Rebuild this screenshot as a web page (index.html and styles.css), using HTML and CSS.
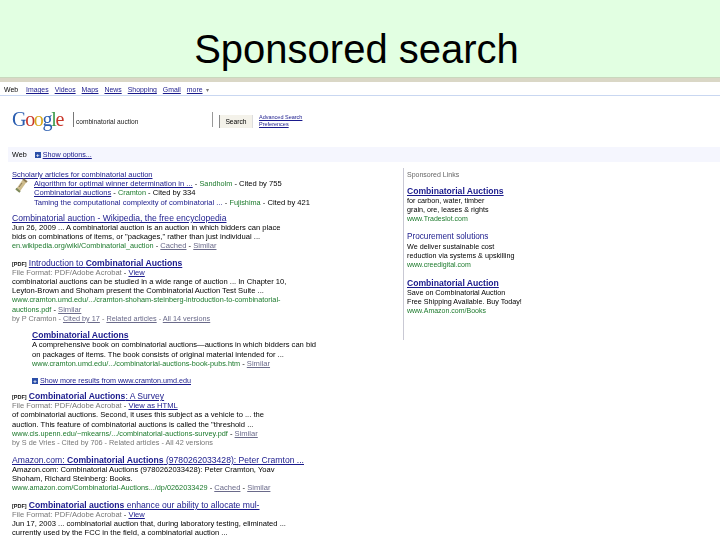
FILE: index.html
```html
<!DOCTYPE html>
<html lang="en">
<head>
<meta charset="utf-8">
<title>Sponsored search</title>
<link rel="stylesheet" href="styles.css">
</head>
<body>
<header class="slide-head"><h1>Sponsored search</h1></header>
<main class="shot">
  <nav class="topnav">
    <span class="cur">Web</span><a>Images</a><a>Videos</a><a>Maps</a><a>News</a><a>Shopping</a><a>Gmail</a><a>more</a><span class="arrow">▾</span>
  </nav>
  <div class="searchrow">
    <div class="logo"><span class="b">G</span><span class="r">o</span><span class="y">o</span><span class="b">g</span><span class="g">l</span><span class="r">e</span></div>
    <div class="query">combinatorial auction</div>
    <div class="btn">Search</div>
    <div class="adv"><a>Advanced Search</a><a>Preferences</a></div>
  </div>
  <div class="webbar"><span>Web</span><i class="plus">+</i><a>Show options...</a></div>
  <div class="cols">
    <div class="results">
      <div class="res first">
        <a class="plain">Scholarly articles for combinatorial auction</a>
        <div class="scholar">
          <svg class="scroll" width="13" height="16" viewBox="0 0 13 16"><path d="M2.5 13 L9.5 3" stroke="#cdbb8c" stroke-width="4.5"/><path d="M1 10.5 L5 14" stroke="#7d8a5c" stroke-width="2"/><path d="M8 1 L12 4" stroke="#8d7a50" stroke-width="2"/><path d="M4 9 L7 5" stroke="#8a7a58" stroke-width="1"/></svg>
          <div>
            <div class="ln"><a>Algorithm for optimal winner determination in ...</a> - <em>Sandholm</em> - Cited by 755</div>
            <div class="ln"><a>Combinatorial auctions</a> - <em>Cramton</em> - Cited by 334</div>
            <div class="ln"><a class="bare">Taming the computational complexity of combinatorial ...</a> - <em>Fujishima</em> - Cited by 421</div>
          </div>
        </div>
      </div>
      <div class="res">
        <a class="t">Combinatorial auction - Wikipedia, the free encyclopedia</a>
        <div class="ln">Jun 26, 2009 ... A combinatorial auction is an auction in which bidders can place</div>
        <div class="ln">bids on combinations of items, or "packages," rather than just individual ...</div>
        <div class="ln"><em>en.wikipedia.org/wiki/Combinatorial_auction</em> - <u>Cached</u> - <u>Similar</u></div>
      </div>
      <div class="res">
        <div class="head"><b class="pdf">[PDF]</b> <a class="t">Introduction to <b>Combinatorial Auctions</b></a></div>
        <div class="ln"><span class="grey">File Format: PDF/Adobe Acrobat</span> - <a>View</a></div>
        <div class="ln">combinatorial auctions can be studied in a wide range of auction ... In Chapter 10,</div>
        <div class="ln">Leyton-Brown and Shoham present the Combinatorial Auction Test Suite ...</div>
        <div class="ln"><em>www.cramton.umd.edu/.../cramton-shoham-steinberg-introduction-to-combinatorial-</em></div>
        <div class="ln"><em>auctions.pdf</em> - <u>Similar</u></div>
        <div class="ln by">by P Cramton - <u>Cited by 17</u> - <u>Related articles</u> - <u>All 14 versions</u></div>
      </div>
      <div class="res sub">
        <a class="t"><b>Combinatorial Auctions</b></a>
        <div class="ln">A comprehensive book on combinatorial auctions—auctions in which bidders can bid</div>
        <div class="ln">on packages of items. The book consists of original material intended for ...</div>
        <div class="ln"><em>www.cramton.umd.edu/.../combinatorial-auctions-book-pubs.htm</em> - <u>Similar</u></div>
      </div>
      <div class="res sub more"><i class="plus">+</i><a>Show more results from www.cramton.umd.edu</a></div>
      <div class="res">
        <div class="head"><b class="pdf">[PDF]</b> <a class="t"><b>Combinatorial Auctions</b>: A Survey</a></div>
        <div class="ln"><span class="grey">File Format: PDF/Adobe Acrobat</span> - <a>View as HTML</a></div>
        <div class="ln">of combinatorial auctions. Second, it uses this subject as a vehicle to ... the</div>
        <div class="ln">auction. This feature of combinatorial auctions is called the "threshold ...</div>
        <div class="ln"><em>www.cis.upenn.edu/~mkearns/.../combinatorial-auctions-survey.pdf</em> - <u>Similar</u></div>
        <div class="ln by">by S de Vries - Cited by 706 - Related articles - All 42 versions</div>
      </div>
      <div class="res">
        <a class="t">Amazon.com: <b>Combinatorial Auctions</b> (9780262033428): Peter Cramton ...</a>
        <div class="ln">Amazon.com: Combinatorial Auctions (9780262033428): Peter Cramton, Yoav</div>
        <div class="ln">Shoham, Richard Steinberg: Books.</div>
        <div class="ln"><em>www.amazon.com/Combinatorial-Auctions.../dp/0262033429</em> - <u>Cached</u> - <u>Similar</u></div>
      </div>
      <div class="res">
        <div class="head"><b class="pdf">[PDF]</b> <a class="t"><b>Combinatorial auctions</b> enhance our ability to allocate mul-</a></div>
        <div class="ln"><span class="grey">File Format: PDF/Adobe Acrobat</span> - <a>View</a></div>
        <div class="ln">Jun 17, 2003 ... combinatorial auction that, during laboratory testing, eliminated ...</div>
        <div class="ln">currently used by the FCC in the field, a combinatorial auction ...</div>
        <div class="ln"><em>wireless.fcc.gov/auctions/conferences/combin2003/papers/masterLedyard.pdf</em></div>
      </div>
    </div>
    <aside class="ads">
      <div class="adlabel">Sponsored Links</div>
      <div class="ad"><a class="t"><b>Combinatorial Auctions</b></a><div class="ln">for carbon, water, timber</div><div class="ln">grain, ore, leases &amp; rights</div><div class="ln"><em>www.Tradeslot.com</em></div></div>
      <div class="ad"><a class="t proc">Procurement solutions</a><div class="ln">We deliver sustainable cost</div><div class="ln">reduction via systems &amp; upskilling</div><div class="ln"><em>www.creedigital.com</em></div></div>
      <div class="ad"><a class="t"><b>Combinatorial Auction</b></a><div class="ln">Save on Combinatorial Auction</div><div class="ln">Free Shipping Available. Buy Today!</div><div class="ln"><em>www.Amazon.com/Books</em></div></div>
    </aside>
  </div>
</main>
</body>
</html>
```
FILE: styles.css
```css
* { box-sizing: border-box; }
html, body { margin: 0; height: 540px; overflow: hidden; background: #fff; }
body { font-family: "Liberation Sans", Arial, sans-serif; color: #000; }
.slide-head { height: 78px; background: #e2ffe2; display: flex; justify-content: center; padding: 26px 7px 0 0; border-bottom: 1px solid #c9d8bd; }
.slide-head h1 { margin: 0; font-weight: 400; font-size: 40px; line-height: 46px; }
.shot { border-top: 4px solid #dad7c6; font-size: 7.6px; line-height: 9.2px; height: 458px; overflow: hidden; filter: blur(0.25px); }
a { color: #1a1a8c; text-decoration: underline; }
a.bare { text-decoration: none; }
em { font-style: normal; color: #1c7a2c; font-size: 7.3px; }
u { color: #6a6a8a; }
.topnav { height: 14px; border-bottom: 1px solid #c9d7f1; padding: 3px 0 0 4px; display: flex; gap: 6px; align-items: baseline; font-size: 6.9px; }
.cur { margin-right: 2px; }
.arrow { color: #777; font-size: 6px; margin-left: -3px; }
.searchrow { height: 51px; display: flex; padding-left: 12px; }
.logo { font-family: "Liberation Serif", serif; font-size: 20px; line-height: 24px; width: 61px; margin-top: 11px; letter-spacing: -1.3px; }
.logo .b { color: #2a5db0; }
.logo .r { color: #c8372a; }
.logo .y { color: #d9a81e; }
.logo .g { color: #3a9a48; }
.query { width: 140px; height: 15px; margin-top: 16px; border-left: 1px solid #777; border-right: 1px solid #999; padding: 5px 0 0 2px; color: #222; white-space: nowrap; font-size: 6.6px; }
.btn { width: 34px; height: 13px; margin: 19px 0 0 6px; border-left: 1px solid #888; border-right: 1px solid #ddd; background: #f4f2ea; text-align: center; padding-top: 2px; font-size: 6.7px; }
.adv { margin: 18px 0 0 6px; display: flex; flex-direction: column; font-size: 5.5px; line-height: 7px; }
.webbar { height: 15px; margin-left: 8px; background: #f5f6fe; padding: 3px 0 0 4px; display: flex; gap: 8px; align-items: baseline; font-size: 7.2px; }
.webbar a { margin-left: -6px; }
.plus { display: inline-block; width: 6px; height: 6px; background: #2b4fa8; color: #fff; font: 700 6px/6px "Liberation Sans", sans-serif; text-align: center; font-style: normal; }
.cols { display: flex; }
.results { width: 403px; padding: 8px 0 0 12px; white-space: nowrap; flex: none; }
.res { margin-bottom: 7.5px; }
.res.first { margin-bottom: 6px; }
.t { font-size: 8.6px; color: #1a1a8c; }
.res > a.t, .ad > a.t { display: block; width: max-content; height: 10px; line-height: 10px; }
.head { height: 10px; line-height: 10px; }
.ln { height: 9.2px; }
.plain { display: block; width: max-content; font-size: 7.5px; }
.scholar { display: flex; gap: 6px; padding-left: 3px; }
.scroll { margin-top: -1px; flex: none; }
.sub { padding-left: 20px; }
.more { font-size: 7.2px; margin-bottom: 6.5px; }
.more a { margin-left: 2px; }
.pdf { font-size: 5.5px; color: #111; }
.grey { color: #777; }
.by { color: #777; font-size: 7.3px; }
.ads { border-left: 1px solid #c9c9d4; height: 172px; margin-top: 6px; padding: 2px 0 0 3px; white-space: nowrap; font-size: 7.2px; }
.adlabel { color: #666; margin-bottom: 6.5px; font-size: 7px; }
.ad { margin-bottom: 8.4px; }
.ad em { font-size: 7px; }
.proc { text-decoration: none; font-size: 8.2px; }
```
